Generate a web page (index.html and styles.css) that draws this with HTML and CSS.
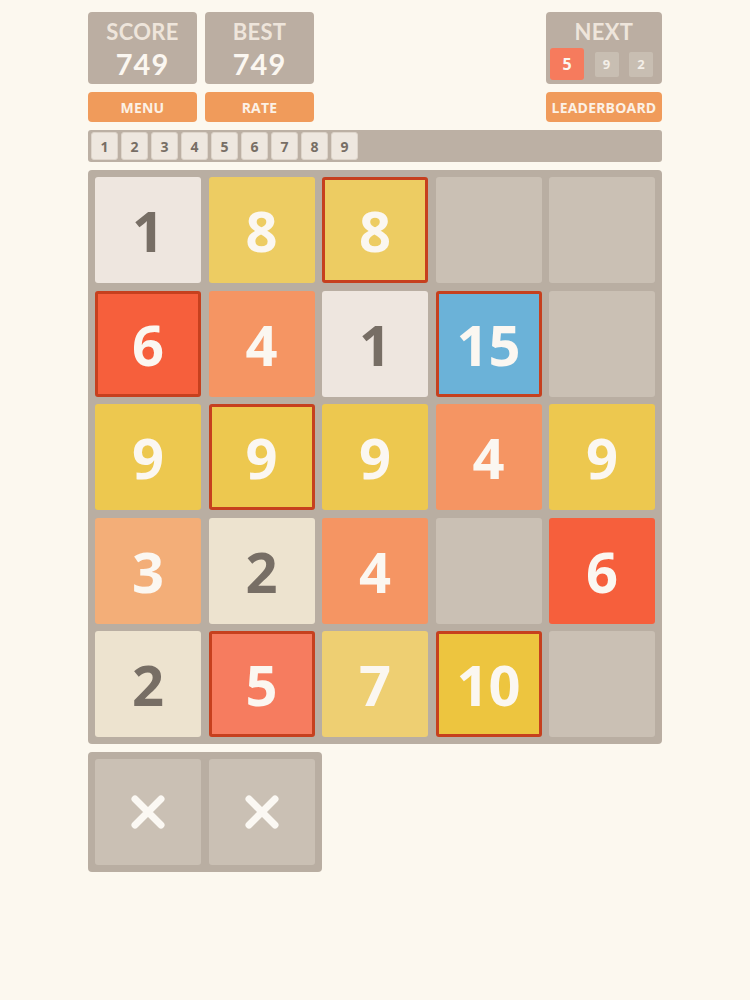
FILE: index.html
```html
<!DOCTYPE html>
<html>
<head>
<meta charset="utf-8">
<link rel="stylesheet" href="styles.css">
</head>
<body>
<div class="page">
  <div class="header">
    <div class="group">
      <div class="col">
        <div class="stat"><div class="label">SCORE</div><div class="value">749</div></div>
        <div class="btn">MENU</div>
      </div>
      <div class="col">
        <div class="stat"><div class="label">BEST</div><div class="value">749</div></div>
        <div class="btn">RATE</div>
      </div>
    </div>
    <div class="col col-next">
      <div class="stat next">
        <div class="label">NEXT</div>
        <div class="next-row">
          <div class="nt nt-big">5</div>
          <div class="nt">9</div>
          <div class="nt">2</div>
        </div>
      </div>
      <div class="btn">LEADERBOARD</div>
    </div>
  </div>

  <div class="strip">
    <div class="st">1</div><div class="st">2</div><div class="st">3</div>
    <div class="st">4</div><div class="st">5</div><div class="st">6</div>
    <div class="st">7</div><div class="st">8</div><div class="st">9</div>
  </div>

  <div class="board">
    <div class="tile t1">1</div>
    <div class="tile t8">8</div>
    <div class="tile t8 hl">8</div>
    <div class="tile empty"></div>
    <div class="tile empty"></div>

    <div class="tile t6 hl">6</div>
    <div class="tile t4">4</div>
    <div class="tile t1">1</div>
    <div class="tile t15 hl">15</div>
    <div class="tile empty"></div>

    <div class="tile t9">9</div>
    <div class="tile t9 hl">9</div>
    <div class="tile t9">9</div>
    <div class="tile t4">4</div>
    <div class="tile t9">9</div>

    <div class="tile t3">3</div>
    <div class="tile t2">2</div>
    <div class="tile t4">4</div>
    <div class="tile empty"></div>
    <div class="tile t6">6</div>

    <div class="tile t2">2</div>
    <div class="tile t5 hl">5</div>
    <div class="tile t7">7</div>
    <div class="tile t10 hl">10</div>
    <div class="tile empty"></div>
  </div>

  <div class="tray">
    <div class="tile empty xt">
      <svg width="40" height="40" viewBox="0 0 40 40"><path d="M7 7 L33 33 M33 7 L7 33" stroke="#fbf8f3" stroke-width="7" stroke-linecap="round"/></svg>
    </div>
    <div class="tile empty xt">
      <svg width="40" height="40" viewBox="0 0 40 40"><path d="M7 7 L33 33 M33 7 L7 33" stroke="#fbf8f3" stroke-width="7" stroke-linecap="round"/></svg>
    </div>
  </div>
</div>
</body>
</html>
```

FILE: styles.css
```css
html, body {
  margin: 0;
  padding: 0;
  background: #fcf8ef;
}
body {
  font-family: "Open Sans", "DejaVu Sans", sans-serif;
}
.page {
  width: 574px;
  margin-left: 88px;
  padding-top: 12px;
}
.header {
  display: flex;
  justify-content: space-between;
}
.group {
  display: flex;
  gap: 8px;
}
.col {
  display: flex;
  flex-direction: column;
  gap: 8px;
  width: 109px;
}
.col-next {
  width: 116px;
}
.stat {
  height: 72px;
  background: #bbaea2;
  border-radius: 4px;
  display: flex;
  flex-direction: column;
  align-items: center;
  box-sizing: border-box;
  padding-top: 7px;
}
.label {
  font-family: Lato, "Open Sans", sans-serif;
  font-size: 22px;
  line-height: 25px;
  font-weight: 700;
  color: #eee5db;
  letter-spacing: 0.3px;
}
.value {
  font-family: Lato, "Open Sans", sans-serif;
  margin-top: 1.5px;
  font-size: 29px;
  line-height: 35px;
  font-weight: 700;
  color: #fbf7f1;
  letter-spacing: 1px;
}
.next {
  align-items: stretch;
}
.next .label {
  text-align: center;
}
.next-row {
  display: flex;
  align-items: center;
  justify-content: space-between;
  padding: 4px 9px 0 4px;
}
.nt {
  width: 24px;
  height: 25px;
  background: #c8beb2;
  border-radius: 2px;
  color: #f4efe8;
  font-size: 13px;
  font-weight: 700;
  display: flex;
  align-items: center;
  justify-content: center;
}
.nt-big {
  width: 34px;
  height: 32px;
  background: #f67b5d;
  font-size: 16px;
  color: #fbf7f1;
  border-radius: 3px;
}
.btn {
  height: 30px;
  background: #f09b5b;
  border-radius: 4px;
  color: #fcf1e6;
  font-size: 14px;
  font-weight: 700;
  display: flex;
  align-items: center;
  justify-content: center;
  letter-spacing: 0.2px;
}
.strip {
  margin-top: 8px;
  height: 32px;
  background: #bcb0a4;
  border-radius: 3px;
  display: flex;
  align-items: center;
  gap: 3px;
  padding-left: 3px;
}
.st {
  width: 27px;
  height: 28px;
  background: #eee7df;
  border: 1px solid #ded5cb;
  border-radius: 3px;
  box-sizing: border-box;
  color: #776e65;
  font-size: 14px;
  font-weight: 700;
  display: flex;
  align-items: center;
  justify-content: center;
}
.board {
  margin-top: 8px;
  width: 574px;
  height: 574px;
  box-sizing: border-box;
  padding: 7px;
  background: #b9aea2;
  border-radius: 4px;
  display: grid;
  grid-template-columns: repeat(5, 106px);
  grid-template-rows: repeat(5, 106px);
  gap: 7.5px;
}
.tile {
  border-radius: 3px;
  box-sizing: border-box;
  display: flex;
  align-items: center;
  justify-content: center;
  font-size: 56px;
  font-weight: 700;
  color: #fbf7f1;
}
.empty { background: #cac0b4; }
.t1 { background: #eee6df; color: #776e65; }
.t2 { background: #ede3cf; color: #776e65; }
.t3 { background: #f3ae78; }
.t4 { background: #f59563; }
.t5 { background: #f67c5f; }
.t6 { background: #f65f3c; }
.t7 { background: #eecf72; }
.t8 { background: #edcc62; }
.t9 { background: #edc84f; }
.t10 { background: #edc53f; }
.t15 { background: #6bb2d8; }
.hl { border: 3px solid #c6401e; }
.tray {
  margin-top: 8px;
  width: 234px;
  height: 120px;
  box-sizing: border-box;
  padding: 7px;
  background: #b9aea2;
  border-radius: 4px;
  display: flex;
  gap: 8px;
}
.xt {
  width: 106px;
  height: 106px;
}
```
